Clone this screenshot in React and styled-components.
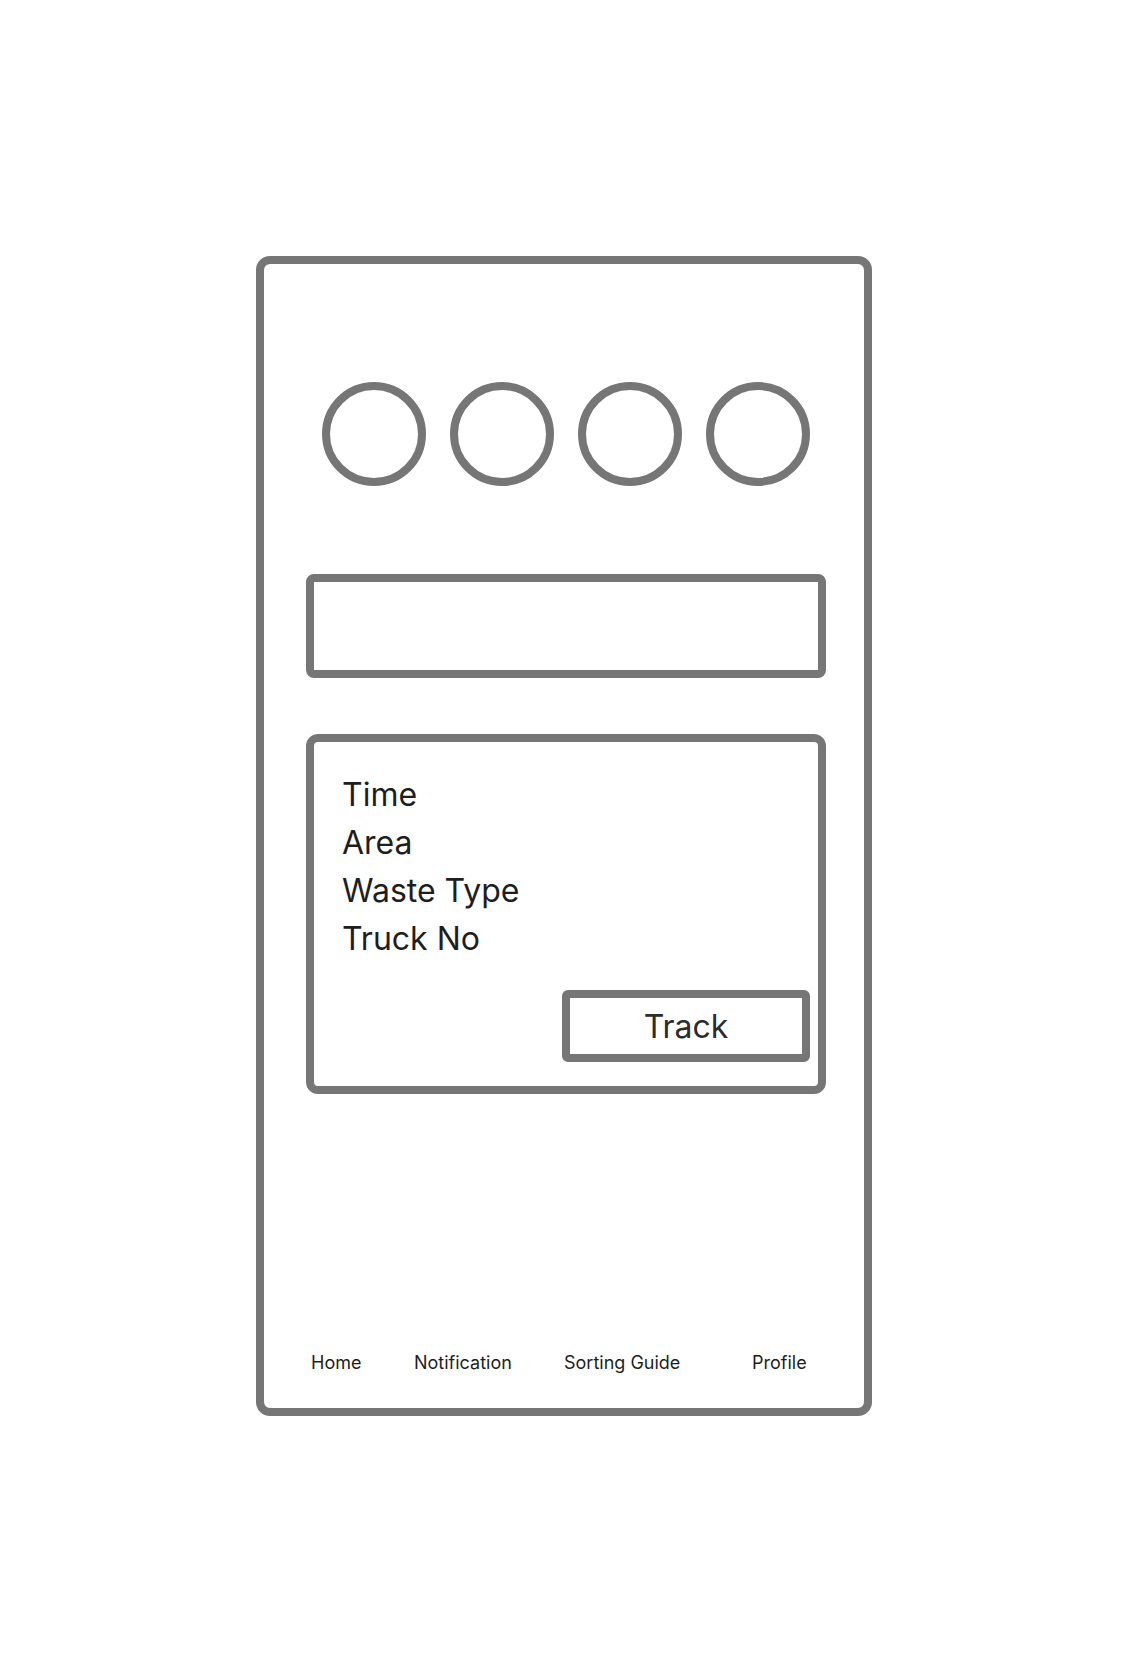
import React from 'react';
import styled, { createGlobalStyle } from 'styled-components';

const Global = createGlobalStyle`
  html, body {
    margin: 0;
    padding: 0;
    background: #fff;
  }
  body {
    font-family: Inter, "Noto Sans", sans-serif;
    color: #1e1e1e;
  }
`

const line = '#767676'

const Page = styled.main`
  width: 1128px;
  height: 1672px;
  display: flex;
  justify-content: center;
  padding-top: 256px;
  box-sizing: border-box;
`

const Phone = styled.section`
  width: 616px;
  height: 1160px;
  box-sizing: border-box;
  border: 8px solid ${line};
  border-radius: 14px;
  display: flex;
  flex-direction: column;
  padding-top: 118px;
`

const Dots = styled.div`
  display: flex;
  gap: 24px;
  padding-left: 58px;
`

const Dot = styled.div`
  width: 104px;
  height: 104px;
  box-sizing: border-box;
  border: 8px solid ${line};
  border-radius: 50%;
`

const Search = styled.div`
  margin: 88px 0 0 42px;
  width: 520px;
  height: 104px;
  box-sizing: border-box;
  border: 8px solid ${line};
  border-radius: 8px;
`

const Card = styled.div`
  margin: 56px 0 0 42px;
  width: 520px;
  height: 360px;
  box-sizing: border-box;
  border: 8px solid ${line};
  border-radius: 12px;
  padding: 29px 8px 24px 28px;
  display: flex;
  flex-direction: column;
`

const Label = styled.div`
  font-size: 32px;
  line-height: 48px;
  color: #1e1e1e;
`

const TrackButton = styled.button`
  margin-top: auto;
  align-self: flex-end;
  width: 248px;
  height: 72px;
  box-sizing: border-box;
  border: 8px solid ${line};
  border-radius: 6px;
  background: #fff;
  font-family: Inter, "Noto Sans", sans-serif;
  font-size: 32px;
  color: #2c2c2c;
  padding: 0;
  cursor: pointer;
`

const Nav = styled.nav`
  margin-top: auto;
  display: grid;
  grid-template-columns: 103px 150px 188px auto;
  padding: 0 0 34px 47px;
`

const NavItem = styled.span`
  font-size: 18px;
  line-height: 22px;
  color: #1e1e1e;
`

const navItems = ['Home', 'Notification', 'Sorting Guide', 'Profile']

export default function App() {
  return (
    <Page>
      <Global />
      <Phone>
        <Dots>
          <Dot />
          <Dot />
          <Dot />
          <Dot />
        </Dots>
        <Search />
        <Card>
          <Label>Time</Label>
          <Label>Area</Label>
          <Label>Waste Type</Label>
          <Label>Truck No</Label>
          <TrackButton>Track</TrackButton>
        </Card>
        <Nav>
          {navItems.map(label => (
            <NavItem key={label}>{label}</NavItem>
          ))}
        </Nav>
      </Phone>
    </Page>
  )
}
